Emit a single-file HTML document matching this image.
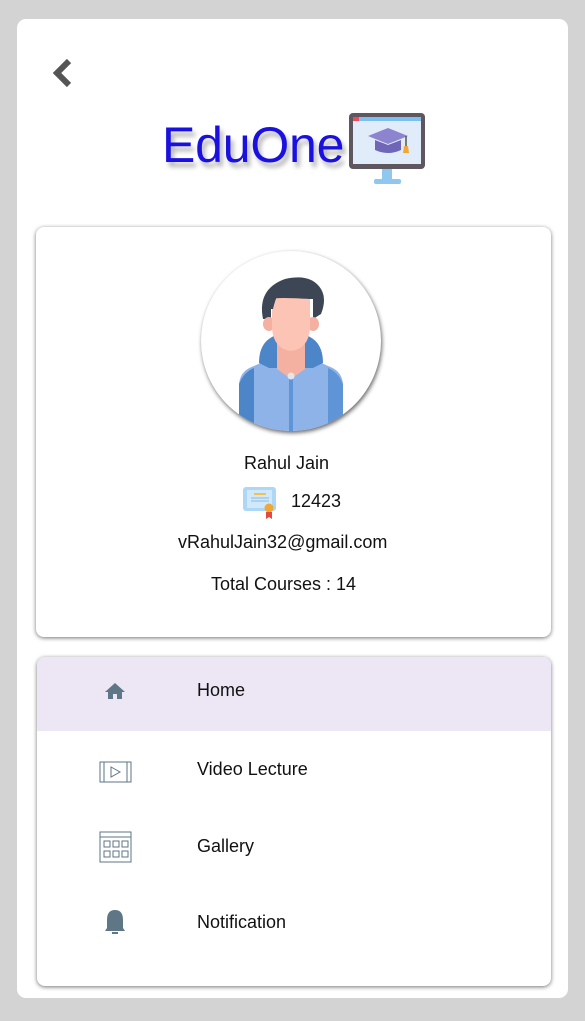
<!DOCTYPE html>
<html><head><style>
body{margin:0;width:585px;height:1021px;background:#d3d3d3;font-family:"Liberation Sans",sans-serif;position:relative;overflow:hidden}
.main{position:absolute;left:17px;top:19px;width:551px;height:979px;background:#fff;border-radius:9px}
.card{position:absolute;background:#fff;border-radius:8px;box-shadow:0 1px 4px rgba(0,0,0,.55)}
.t{position:absolute;color:#111;font-size:18px;white-space:nowrap}
</style></head><body>
<div class="main"></div>
<svg style="position:absolute;left:50px;top:58px" width="24" height="32"><path d="M19 3 L7 15 L19 27" stroke="#555" stroke-width="6" fill="none"/></svg>
<div style="position:absolute;left:162px;top:116px;font-size:50px;color:#1a10e0;text-shadow:3px 5px 5px rgba(0,0,0,.3);letter-spacing:-0.2px">EduOne</div>
<svg style="position:absolute;left:348px;top:112px" width="80" height="78">
<rect x="1" y="1" width="76" height="56" rx="4" fill="#5f5760"/>
<rect x="5" y="5" width="68" height="47" fill="#e1ecfb"/>
<rect x="5" y="5" width="68" height="4" fill="#7bc0ef"/><rect x="5" y="5" width="6" height="4" fill="#f04b5a"/>
<path d="M20 24 L40 16 L60 24 L40 32Z" fill="#8c84cf"/><path d="M27 28 v10 q13 6 26 0 v-10 l-13 5z" fill="#6f66b8"/>
<path d="M58 24 v10" stroke="#555" stroke-width="1.5"/><path d="M56 34 h4 l1 7 h-6z" fill="#f0a835"/>
<rect x="34" y="57" width="10" height="12" fill="#8fc7ef"/><rect x="26" y="67" width="27" height="5" rx="2" fill="#8fc7ef"/>
</svg>
<div class="card" style="left:36px;top:227px;width:515px;height:410px"></div>
<div style="position:absolute;left:201px;top:251px;width:180px;height:180px;border-radius:50%;background:#fff;box-shadow:1px 2px 4px rgba(0,0,0,.6);overflow:hidden">
<svg width="180" height="180" viewBox="0 0 180 180">
<path d="M38 180 V135 q0-15 15-20 L75 105 h30 l22 10 q15 5 15 20 V180z" fill="#8eb3e8"/>
<path d="M38 180 V133 q5-12 15-16 V180z" fill="#4d86c8"/><path d="M142 180 V133 q-5-12-15-16 V180z" fill="#5f95d6"/>
<path d="M58 112 q0-30 32-30 q32 0 32 30 l-10 5 h-44z" fill="#4d86c8"/>
<path d="M76 88 h28 v30 l-14 10 l-14-10z" fill="#f4b0a0"/>
<rect x="88" y="126" width="4" height="54" fill="#5f95d6"/><circle cx="90" cy="125" r="3.5" fill="#e5e5e5"/>
<path d="M62 68 q-6-30 22-40 q26-6 36 10 q6 10 0 25 l-8 5 v-20 h-42 v20z" fill="#3c4654"/>
<ellipse cx="68" cy="73" rx="6" ry="7" fill="#f4b0a0"/><ellipse cx="112" cy="73" rx="6" ry="7" fill="#f4b0a0"/>
<path d="M71 48 q4-2 38 0 v30 q-2 20-19 22 q-17-2-19-22z" fill="#fcc4b4"/>
<path d="M66 58 q-2-24 20-28 q-10 10-14 28z" fill="#3c4654"/>
</svg></div>
<div class="t" style="left:244px;top:453px">Rahul Jain</div>
<svg style="position:absolute;left:242px;top:486px" width="36" height="34"><rect x="1" y="1" width="33" height="24" rx="3" fill="#aed6f7"/><rect x="5" y="4" width="25" height="18" fill="#cfe8fb"/><rect x="12" y="7" width="12" height="2" fill="#f2c04c"/><path d="M9 12h18M9 15h18" stroke="#8ab7e0"/><circle cx="27" cy="22" r="4.5" fill="#f0a835"/><path d="M24 26 v7 l3-2 l3 2 v-7" fill="#e4483f"/></svg>
<div class="t" style="left:291px;top:491px">12423</div>
<div class="t" style="left:178px;top:532px">vRahulJain32@gmail.com</div>
<div class="t" style="left:211px;top:574px">Total Courses : 14</div>
<div class="card" style="left:37px;top:657px;width:514px;height:329px;overflow:hidden">
<div style="position:absolute;left:0;top:0;width:514px;height:74px;background:#ece6f5"></div></div>
<svg style="position:absolute;left:104px;top:682px" width="22" height="18" viewBox="0 0 22 18"><path d="M11 1 L1 10 h3 v7 h5 v-5 h4 v5 h5 v-7 h3z" fill="#5e7685"/></svg>
<div class="t" style="left:197px;top:680px">Home</div>
<svg style="position:absolute;left:99px;top:761px" width="33" height="22"><rect x="1" y="1" width="31" height="20" fill="none" stroke="#5e7685"/><path d="M5 1v20M28 1v20" stroke="#5e7685"/><path d="M12 6 l9 5 l-9 5z" fill="none" stroke="#5e7685"/></svg>
<div class="t" style="left:197px;top:759px">Video Lecture</div>
<svg style="position:absolute;left:99px;top:831px" width="33" height="32"><rect x="1" y="1" width="31" height="30" fill="none" stroke="#5e7685"/><path d="M1 6h31" stroke="#5e7685"/><g fill="none" stroke="#5e7685"><rect x="5" y="10" width="6" height="6"/><rect x="14" y="10" width="6" height="6"/><rect x="23" y="10" width="6" height="6"/><rect x="5" y="20" width="6" height="6"/><rect x="14" y="20" width="6" height="6"/><rect x="23" y="20" width="6" height="6"/></g></svg>
<div class="t" style="left:197px;top:836px">Gallery</div>
<svg style="position:absolute;left:104px;top:909px" width="22" height="27"><path d="M11 1 q-8 0-8 10 v8 l-2 3 h20 l-2-3 v-8 q0-10-8-10z" fill="#5e7685"/><rect x="8" y="23" width="6" height="2" fill="#5e7685"/></svg>
<div class="t" style="left:197px;top:912px">Notification</div>
</body></html>
